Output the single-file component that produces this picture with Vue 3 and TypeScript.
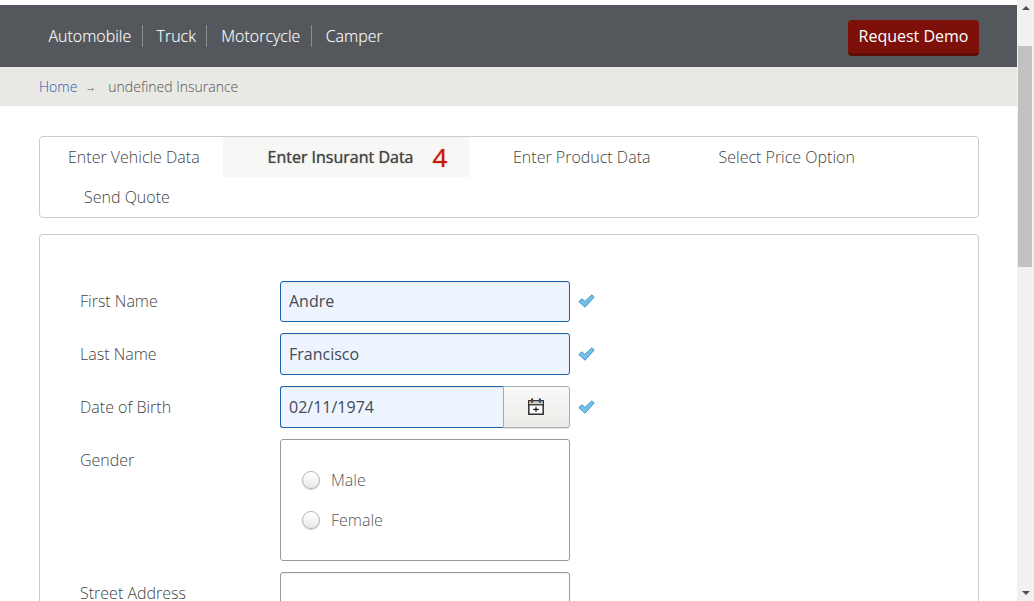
<script setup lang="ts">
const navItems: string[] = ['Automobile', 'Truck', 'Motorcycle', 'Camper']
</script>

<template>
  <div class="shell">
    <div class="page">
      <header class="nav">
        <ul class="nav-links">
          <li v-for="item in navItems" :key="item"><a>{{ item }}</a></li>
        </ul>
        <button class="demo" type="button">Request Demo</button>
      </header>
      <div class="crumbs">
        <a class="home">Home</a>
        <span class="arrow">→</span>
        <span class="current">undefined Insurance</span>
      </div>
      <main class="content">
        <nav class="tabs">
          <a class="tab t1">Enter Vehicle Data</a>
          <a class="tab t2"><b>Enter Insurant Data</b><span class="count">4</span></a>
          <a class="tab t3">Enter Product Data</a>
          <a class="tab t4">Select Price Option</a>
          <a class="tab t5">Send Quote</a>
        </nav>
        <form class="card">
          <div class="row">
            <label>First Name</label>
            <input class="field filled" value="Andre" />
            <svg class="ok" viewBox="0 0 17 14"><path d="M0.8 7.6 L4 4.8 L6.8 7.4 L14 0.8 L16.2 3 L7 13.2 Z" fill="#74c0ea" stroke="#3f94cb" stroke-width="1" stroke-linejoin="round" /></svg>
          </div>
          <div class="row">
            <label>Last Name</label>
            <input class="field filled" value="Francisco" />
            <svg class="ok" viewBox="0 0 17 14"><path d="M0.8 7.6 L4 4.8 L6.8 7.4 L14 0.8 L16.2 3 L7 13.2 Z" fill="#74c0ea" stroke="#3f94cb" stroke-width="1" stroke-linejoin="round" /></svg>
          </div>
          <div class="row">
            <label>Date of Birth</label>
            <div class="date">
              <input class="field filled date-input" value="02/11/1974" />
              <button class="cal" type="button" aria-label="Open calendar">
                <svg width="16" height="17" viewBox="0 0 16 17">
                  <rect x="0.8" y="2.8" width="14.4" height="13.4" fill="#fff" stroke="#2c2c2c" stroke-width="1.5" />
                  <rect x="1.5" y="3.5" width="13" height="3" fill="#d8d2c6" />
                  <path d="M1 6.8 H15" stroke="#2c2c2c" stroke-width="1.3" />
                  <rect x="3" y="0.4" width="2.2" height="4.4" fill="#5a3f28" />
                  <rect x="10.8" y="0.4" width="2.2" height="4.4" fill="#274f78" />
                  <path d="M8 8.8 V14 M5.2 11.4 H10.8" stroke="#111" stroke-width="1.1" />
                </svg>
              </button>
            </div>
            <svg class="ok" viewBox="0 0 17 14"><path d="M0.8 7.6 L4 4.8 L6.8 7.4 L14 0.8 L16.2 3 L7 13.2 Z" fill="#74c0ea" stroke="#3f94cb" stroke-width="1" stroke-linejoin="round" /></svg>
          </div>
          <div class="row top">
            <label>Gender</label>
            <div class="radio-box">
              <div class="radio"><span class="dot"></span>Male</div>
              <div class="radio"><span class="dot"></span>Female</div>
            </div>
          </div>
          <div class="row">
            <label>Street Address</label>
            <input class="field" />
          </div>
        </form>
      </main>
    </div>
    <aside class="scrollbar">
      <span class="up"></span>
      <span class="thumb"></span>
      <span class="down"></span>
    </aside>
  </div>
</template>

<style>
html, body { margin: 0; height: 100%; overflow: hidden; background: #fff; }
</style>

<style scoped>
.shell {
  display: flex;
  width: 1034px;
  height: 601px;
  overflow: hidden;
  font-family: "Open Sans", "Liberation Sans", sans-serif;
  color: #555;
}
.page { flex: 1; min-width: 0; padding-top: 5px; }

.nav {
  height: 62px;
  background: #54575c;
  display: flex;
  align-items: center;
  justify-content: space-between;
  padding: 0 38px 0 39px;
}
.nav-links { display: flex; list-style: none; margin: 0; padding: 0; }
.nav-links li {
  padding: 0 10.3px 0 9.4px;
  border-left: 1px solid #8b8d90;
  line-height: 22px;
  font-size: 16px;
  font-weight: 300;
  color: #fff;
  text-shadow: 0 0 1px rgba(255, 255, 255, 0.4);
}
.nav-links li:first-child { border-left: 0; }
.nav-links li + li { padding-left: 14px; }
.demo {
  width: 131px;
  height: 36px;
  margin-top: 4px;
  border: 0;
  border-bottom: 3px solid #5f0d07;
  border-radius: 4px;
  background: #7d1109;
  color: #fff;
  font: 16px "Open Sans", "Liberation Sans", sans-serif;
  padding: 0 0 2px;
}

.crumbs {
  height: 39px;
  background: #e8e8e4;
  display: flex;
  align-items: center;
  padding-left: 39px;
  font-size: 14px;
  font-weight: 300;
  color: #555;
}
.home { color: #2f55b5; }
.arrow { width: 31px; padding: 0 0 0 8px; box-sizing: border-box; font-size: 11px; font-weight: 400; }

.content { padding: 30px 38px 0 39px; }
.tabs {
  display: flex;
  flex-wrap: wrap;
  border: 1px solid #ccc;
  border-radius: 4px;
  font-size: 16px;
  font-weight: 300;
}
.tab { height: 40px; line-height: 40px; color: #444; white-space: nowrap; box-sizing: border-box; }
.t1 { width: 183px; padding-left: 28px; }
.t2 { width: 246px; padding-left: 44.5px; background: #f7f7f5; }
.t2 b { font-weight: 400; font-size: 16px; text-shadow: 0 0 1px rgba(60, 60, 60, 0.8); }
.count { color: #c9190e; font-size: 26px; font-weight: 400; margin-left: 19px; line-height: 40px; vertical-align: top; text-shadow: 0 0 1px rgba(201, 25, 14, 0.9); }
.t3 { width: 205.5px; padding-left: 44px; }
.t4 { width: 260px; padding-left: 44px; }
.t5 { width: 100%; padding-left: 44px; }

.card {
  margin-top: 16px;
  border: 1px solid #ccc;
  border-radius: 4px;
  padding: 45.6px 40px 60px;
}
.row { display: flex; align-items: center; margin-bottom: 11px; }
.row.top { align-items: flex-start; }
.row label { width: 200px; font-size: 16px; font-weight: 300; color: #444; }
.row.top label { padding-top: 10px; }
.field {
  width: 290px;
  height: 41.7px;
  box-sizing: border-box;
  border: 1px solid #999;
  border-radius: 3px;
  padding: 0 8px;
  background: #fff;
  font: 16px "Open Sans", "Liberation Sans", sans-serif;
  color: #414a57;
  outline: none;
  box-shadow: inset 0 1px 1px rgba(0, 0, 0, 0.06);
}
.field.filled { background: #edf4fe; border-color: #1c62ad; }
.ok { width: 17px; height: 14px; margin-left: 8px; }
.date { display: flex; width: 290px; }
.date-input { width: 223px; border-right: 0; border-radius: 3px 0 0 3px; }
.cal {
  width: 67px;
  height: 41.7px;
  padding: 0 2px 0 0;
  border: 1px solid #aaa;
  border-radius: 0 3px 3px 0;
  background: linear-gradient(#f9f9f8, #ecebe8);
  box-shadow: 0 1px 1px rgba(0, 0, 0, 0.12);
  display: flex;
  align-items: center;
  justify-content: center;
}
.radio-box {
  width: 290px;
  height: 122px;
  box-sizing: border-box;
  border: 1px solid #999;
  border-radius: 3px;
  padding: 20px 21px;
}
.radio {
  display: flex;
  align-items: center;
  height: 40px;
  font-size: 16px;
  font-weight: 300;
  color: #555;
}
.dot {
  width: 18px;
  height: 18px;
  box-sizing: border-box;
  margin-right: 11px;
  border-radius: 50%;
  border: 1px solid #b5b5b5;
  background: linear-gradient(#fff, #e9e9e9);
  box-shadow: 0 1px 1px rgba(0, 0, 0, 0.2);
}

.scrollbar {
  width: 17px;
  flex: none;
  background: #f1f1f1;
  position: relative;
}
.thumb {
  position: absolute;
  left: 1px;
  top: 46px;
  width: 14px;
  height: 221px;
  background: #c1c1c1;
}
.up, .down {
  position: absolute;
  left: 5px;
  width: 0;
  height: 0;
  border-left: 4px solid transparent;
  border-right: 4px solid transparent;
}
.up { top: 6px; border-bottom: 4px solid #505050; }
.down { bottom: 6px; border-top: 4px solid #505050; }
</style>
